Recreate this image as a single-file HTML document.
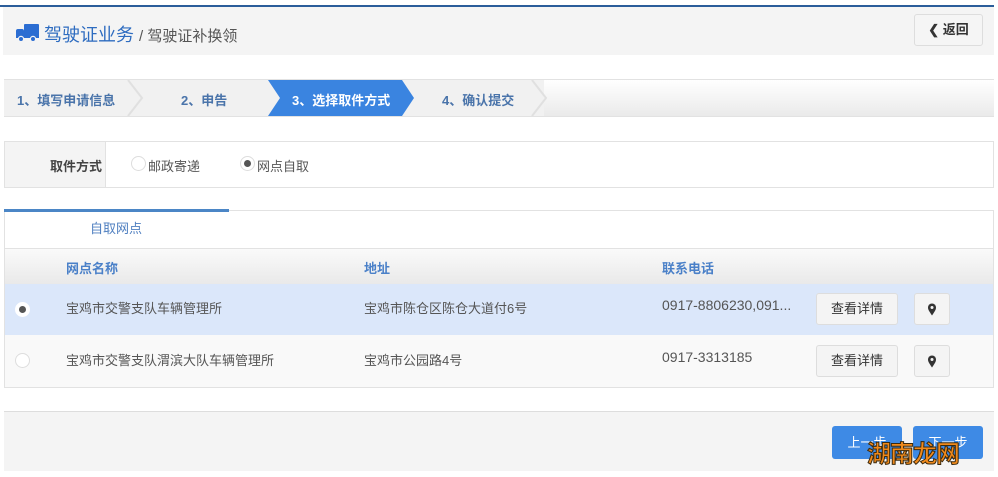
<!DOCTYPE html>
<html><head><meta charset="utf-8"><style>
*{box-sizing:border-box;margin:0;padding:0}
body{width:998px;height:477px;background:#fff;position:relative;overflow:hidden;font-family:"Liberation Sans","Noto Sans CJK SC","Microsoft YaHei",sans-serif;font-size:13px;color:#555}
.a{position:absolute}
.btn{position:absolute;background:#f4f4f4;border:1px solid #ddd;border-radius:3px;text-align:center;color:#333}
.radio{position:absolute;width:15px;height:15px;border-radius:50%;background:#fff;border:1px solid #ddd}
.radio.on::after{content:"";position:absolute;left:3px;top:3px;width:7px;height:7px;border-radius:50%;background:#555}
</style></head><body>
<div class="a" style="left:0;top:5px;width:994px;height:2px;background:#2b5d9a"></div>
<div class="a" style="left:3px;top:7px;width:991px;height:48px;background:#f4f4f4"></div>
<svg class="a" style="left:16px;top:24px" width="23" height="18" viewBox="0 0 23 18"><rect x="0" y="5" width="8" height="8" rx="2" fill="#2b6dd2"/><rect x="8" y="0" width="15" height="13" rx="1" fill="#2b6dd2"/><rect x="0" y="11" width="23" height="3" fill="#2b6dd2"/><circle cx="5" cy="15" r="2.6" fill="#2b6dd2" stroke="#f4f4f4" stroke-width="1.2"/><circle cx="17" cy="15" r="2.6" fill="#2b6dd2" stroke="#f4f4f4" stroke-width="1.2"/></svg>
<div class="a" style="left:44px;top:21px;font-size:18px;color:#2e6cc0">驾驶证业务 <span style="font-size:15px;color:#555">/ 驾驶证补换领</span></div>
<div class="btn" style="left:914px;top:14px;width:69px;height:32px;line-height:30px;font-weight:bold;font-size:13px;background:#f5f5f5">❮ 返回</div>

<div class="a" style="left:4px;top:79px;width:990px;height:38px;background:linear-gradient(#fff,#eaeaea);border-top:1px solid #e2e2e2;border-bottom:1px solid #e2e2e2"></div>
<div class="a" style="left:4px;top:80px;width:540px;height:36px;background:#f1f1f1"></div>
<svg class="a" style="left:120px;top:80px" width="430" height="36"><polyline points="8,0 22,18 8,36" fill="none" stroke="#e0e0e0" stroke-width="2"/><polygon points="148,0 282,0 294,18 282,36 148,36 160,18" fill="#3a84e0"/><polyline points="412,0 426,18 412,36" fill="none" stroke="#e0e0e0" stroke-width="2"/></svg>
<div class="a" style="left:17px;top:90px;font-weight:bold;color:#4a74aa">1、填写申请信息</div>
<div class="a" style="left:181px;top:90px;font-weight:bold;color:#4a74aa">2、申告</div>
<div class="a" style="left:292px;top:90px;font-weight:bold;color:#fff">3、选择取件方式</div>
<div class="a" style="left:442px;top:90px;font-weight:bold;color:#4a74aa">4、确认提交</div>

<div class="a" style="left:4px;top:141px;width:990px;height:47px;border:1px solid #e2e2e2"></div>
<div class="a" style="left:5px;top:142px;width:101px;height:45px;background:#f4f4f4;border-right:1px solid #e2e2e2"></div>
<div class="a" style="left:50px;top:156px;font-weight:bold;color:#444">取件方式</div>
<div class="radio" style="left:131px;top:156px"></div>
<div class="a" style="left:148px;top:156px">邮政寄递</div>
<div class="radio on" style="left:240px;top:156px"></div>
<div class="a" style="left:257px;top:156px">网点自取</div>

<div class="a" style="left:4px;top:210px;width:990px;height:178px;border:1px solid #e2e2e2"></div>
<div class="a" style="left:4px;top:209px;width:225px;height:3px;background:#4b86c6"></div>
<div class="a" style="left:90px;top:218px;color:#4f7fc0">自取网点</div>
<div class="a" style="left:5px;top:248px;width:988px;height:36px;background:linear-gradient(#fafafa,#e9e9e9);border-top:1px solid #e2e2e2"></div>
<div class="a" style="left:66px;top:258px;font-weight:bold;color:#4a80c8">网点名称</div>
<div class="a" style="left:364px;top:258px;font-weight:bold;color:#4a80c8">地址</div>
<div class="a" style="left:662px;top:258px;font-weight:bold;color:#4a80c8">联系电话</div>
<div class="a" style="left:5px;top:284px;width:988px;height:51px;background:#dbe7fa"></div>
<div class="a" style="left:5px;top:335px;width:988px;height:52px;background:#f9f9f9"></div>
<div class="radio on" style="left:15px;top:302px;border-color:#fff"></div>
<div class="radio" style="left:15px;top:353px"></div>
<div class="a" style="left:66px;top:298px">宝鸡市交警支队车辆管理所</div>
<div class="a" style="left:364px;top:298px">宝鸡市陈仓区陈仓大道付6号</div>
<div class="a" style="left:662px;top:297px;font-size:14px">0917-8806230,091...</div>
<div class="a" style="left:66px;top:350px">宝鸡市交警支队渭滨大队车辆管理所</div>
<div class="a" style="left:364px;top:350px">宝鸡市公园路4号</div>
<div class="a" style="left:662px;top:349px;font-size:14px">0917-3313185</div>
<div class="btn" style="left:816px;top:293px;width:82px;height:32px;line-height:30px">查看详情</div>
<div class="btn" style="left:914px;top:293px;width:36px;height:32px;line-height:30px">
<svg width="10" height="13" viewBox="0 0 10 13" style="margin-top:9px"><path d="M5 12.5 C2 8 1 6.5 1 4.5 A4 4 0 0 1 9 4.5 C9 6.5 8 8 5 12.5Z" fill="#333"/><circle cx="5" cy="4.5" r="1.5" fill="#f4f4f4"/></svg></div>
<div class="btn" style="left:816px;top:345px;width:82px;height:32px;line-height:30px">查看详情</div>
<div class="btn" style="left:914px;top:345px;width:36px;height:32px;line-height:30px">
<svg width="10" height="13" viewBox="0 0 10 13" style="margin-top:9px"><path d="M5 12.5 C2 8 1 6.5 1 4.5 A4 4 0 0 1 9 4.5 C9 6.5 8 8 5 12.5Z" fill="#333"/><circle cx="5" cy="4.5" r="1.5" fill="#f4f4f4"/></svg></div>

<div class="a" style="left:4px;top:411px;width:990px;height:60px;background:#f4f4f4;border-top:1px solid #ddd"></div>
<div class="a" style="left:832px;top:426px;width:70px;height:33px;background:#3e8ae5;border-radius:3px;color:#fff;text-align:center;line-height:33px">上一步</div>
<div class="a" style="left:913px;top:426px;width:70px;height:33px;background:#3e8ae5;border-radius:3px;color:#fff;text-align:center;line-height:33px">下一步</div>
<div class="a" style="left:867px;top:434px;font-size:24px;font-weight:bold;color:#f08a1c;-webkit-text-stroke:1px #3a2a10;letter-spacing:-1px">湖南龙网</div>
</body></html>
